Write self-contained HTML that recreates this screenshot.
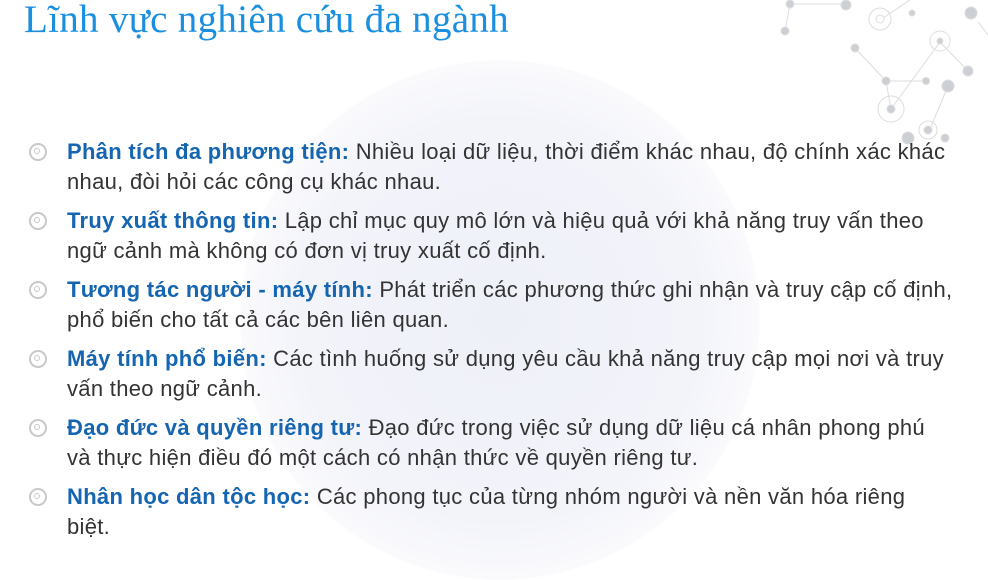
<!DOCTYPE html>
<html><head><meta charset="utf-8"><style>
html,body{margin:0;padding:0;}
body{width:988px;height:554px;overflow:hidden;background:#fff;position:relative;font-family:"Liberation Sans",Arial,sans-serif;}
.glow{position:absolute;left:240px;top:60px;width:520px;height:520px;border-radius:50%;background:radial-gradient(circle,#eef0f8 0%,#f3f4fa 55%,#fafafd 70%,rgba(255,255,255,0) 72%);}
h1{position:absolute;left:24px;top:-2px;margin:0;font-family:"Liberation Serif","DejaVu Serif",serif;font-weight:normal;font-size:39px;color:#1a8fe0;line-height:44px;letter-spacing:0.3px;}
.item{position:absolute;left:67px;width:892px;font-size:22px;line-height:30px;color:#333;letter-spacing:0.3px;}
.item b{color:#1565b0;}
.bul{position:absolute;left:-38px;top:6px;width:14px;height:14px;border:2px solid #c8c8c8;border-radius:50%;}
.bul:after{content:"";position:absolute;left:3px;top:3px;width:6px;height:6px;border:1.5px solid #c8c8c8;border-radius:50%;box-sizing:border-box;}
</style></head><body>
<div class="glow"></div>
<svg style="position:absolute;left:760px;top:0" width="228" height="150" stroke="#ddd" fill="#ccd0d4">
<g stroke-width="1" fill="none"><line x1="30" y1="4" x2="86" y2="4"/><line x1="30" y1="4" x2="25" y2="31"/><line x1="95" y1="48" x2="126" y2="81"/><line x1="126" y1="81" x2="166" y2="81"/><line x1="126" y1="81" x2="131" y2="109"/><line x1="131" y1="109" x2="180" y2="42"/><line x1="180" y1="42" x2="208" y2="71"/><line x1="188" y1="86" x2="168" y2="134"/><line x1="120" y1="20" x2="150" y2="0"/><line x1="218" y1="22" x2="228" y2="35"/><circle cx="120" cy="19" r="11"/><circle cx="180" cy="41" r="10"/><circle cx="131" cy="109" r="13"/><circle cx="168" cy="130" r="9"/></g>
<circle cx="30" cy="4" r="4"/><circle cx="86" cy="5" r="5"/><circle cx="25" cy="31" r="4"/><circle cx="95" cy="48" r="4"/><circle cx="126" cy="81" r="4"/><circle cx="166" cy="81" r="3.5"/><circle cx="131" cy="109" r="4"/><circle cx="208" cy="71" r="5"/><circle cx="188" cy="86" r="6"/><circle cx="211" cy="13" r="6"/><circle cx="152" cy="13" r="3"/><circle cx="180" cy="41" r="3"/><circle cx="168" cy="130" r="4"/><circle cx="148" cy="138" r="6"/><circle cx="185" cy="138" r="4"/><circle cx="120" cy="19" r="4" fill="#fff"/>
</svg>
<h1>Lĩnh vực nghiên cứu đa ngành</h1>
<div class="item" style="top:137px"><span class="bul"></span><b>Phân tích đa phương tiện:</b> Nhiều loại dữ liệu, thời điểm khác nhau, độ chính xác khác nhau, đòi hỏi các công cụ khác nhau.</div>
<div class="item" style="top:206px"><span class="bul"></span><b>Truy xuất thông tin:</b> Lập chỉ mục quy mô lớn và hiệu quả với khả năng truy vấn theo ngữ cảnh mà không có đơn vị truy xuất cố định.</div>
<div class="item" style="top:275px"><span class="bul"></span><b>Tương tác người - máy tính:</b> Phát triển các phương thức ghi nhận và truy cập cố định, phổ biến cho tất cả các bên liên quan.</div>
<div class="item" style="top:344px"><span class="bul"></span><b>Máy tính phổ biến:</b> Các tình huống sử dụng yêu cầu khả năng truy cập mọi nơi và truy vấn theo ngữ cảnh.</div>
<div class="item" style="top:413px"><span class="bul"></span><b>Đạo đức và quyền riêng tư:</b> Đạo đức trong việc sử dụng dữ liệu cá nhân phong phú<br>và thực hiện điều đó một cách có nhận thức về quyền riêng tư.</div>
<div class="item" style="top:482px"><span class="bul"></span><b>Nhân học dân tộc học:</b> Các phong tục của từng nhóm người và nền văn hóa riêng<br>biệt.</div>
</body></html>
